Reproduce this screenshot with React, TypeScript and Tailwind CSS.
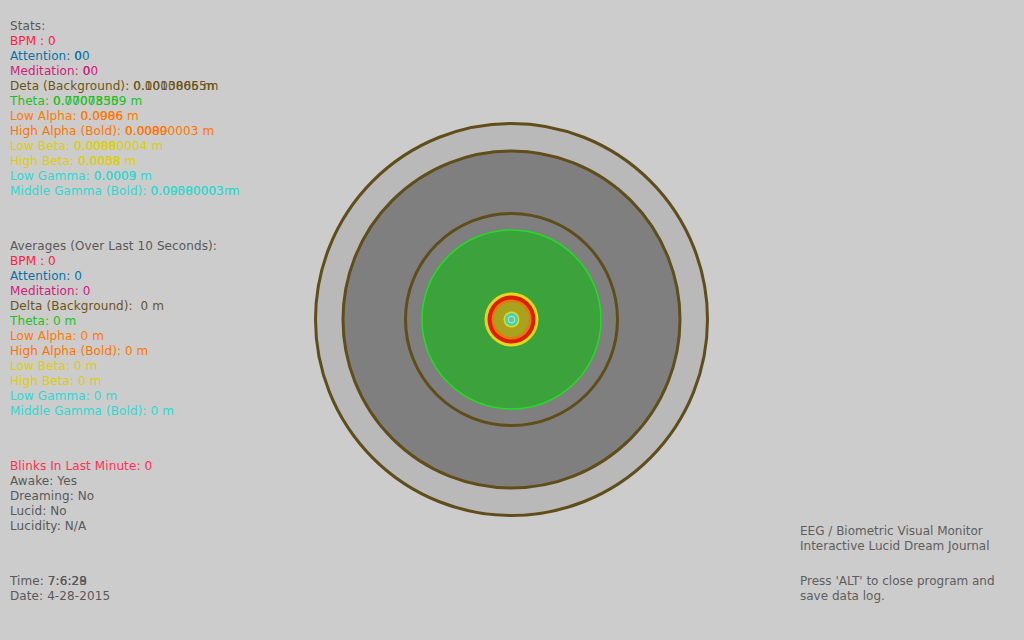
import React from "react";

const Ov = ({ a, b, dx = 0 }: { a: string; b: string; dx?: number }) => (
  <span className="relative inline-block">
    <span>{a}</span>
    <span className="absolute top-0 whitespace-pre" style={{ left: dx }}>
      {b}
    </span>
  </span>
);

const L = ({ c, children }: { c: string; children: React.ReactNode }) => (
  <div className={`whitespace-pre ${c}`}>{children}</div>
);

export default function App() {
  return (
    <div
      className="relative w-[1024px] h-[640px] bg-[#cccccc] overflow-hidden flex"
      style={{ fontFamily: '"DejaVu Sans", Verdana, sans-serif' }}
    >
      <svg
        className="absolute inset-0"
        width={1024}
        height={640}
        viewBox="0 0 1024 640"
      >
        <circle cx={511.5} cy={319.5} r={196} fill="#b9b9b9" stroke="#614d1a" strokeWidth={3} />
        <circle cx={511.5} cy={319.5} r={168.5} fill="#7f7f7f" stroke="#614d1a" strokeWidth={3} />
        <circle cx={511.5} cy={319.5} r={106} fill="#7f7f7f" stroke="#614d1a" strokeWidth={3} />
        <circle cx={511.5} cy={319.5} r={89.5} fill="#3ca33c" stroke="#22dd22" strokeWidth={1.5} />
        <circle cx={511.5} cy={319.5} r={27} fill="#e4d81c" />
        <circle cx={511.5} cy={319.5} r={24} fill="#e21c00" />
        <circle cx={511.5} cy={319.5} r={20} fill="#e07a12" />
        <circle cx={511.5} cy={319.5} r={17.5} fill="#aaa11c" />
        <circle cx={511.5} cy={319.5} r={8} fill="#e4d81c" />
        <circle cx={511.5} cy={319.5} r={6.5} fill="#3cd2c8" />
        <circle cx={511.5} cy={319.5} r={3.2} fill="#5cc8a8" stroke="#b8e0a0" strokeWidth={1.2} />
      </svg>

      <div className="relative flex flex-col gap-[40px] pl-[10px] pt-[19px] text-[12px] leading-[15px] tracking-[0.1px] text-[#595959]">
        <div>
          <L c="">Stats:</L>
          <L c="text-[#ff2040]">BPM : 0</L>
          <L c="text-[#0a72a4]">
            Attention: <Ov a="00" b="0" />
          </L>
          <L c="text-[#d0207c]">
            Meditation: <Ov a="00" b="0" />
          </L>
          <L c="text-[#6b5418]">
            Deta (Background): <Ov a="0.0003865 m" b="0.10100065m" />
          </L>
          <L c="text-[#22c022]">
            Theta: <Ov a="0.00073509 m" b="0.7700835" />
          </L>
          <L c="text-[#ff7a00]">
            Low Alpha: <Ov a="0.0906 m" b="0.0086" />
          </L>
          <L c="text-[#ff7400]">
            High Alpha (Bold): <Ov a="0.00000003 m" b="0.0089" />
          </L>
          <L c="text-[#dcd000]">
            Low Beta: <Ov a="0.00000004 m" b="0.0088" />
          </L>
          <L c="text-[#dcd000]">
            High Beta: <Ov a="0.0008 m" b="0.0038" />
          </L>
          <L c="text-[#30d8d0]">
            Low Gamma: <Ov a="0.0003 m" b="0.0009" />
          </L>
          <L c="text-[#30d8d0]">
            Middle Gamma (Bold): <Ov a="0.00000003 m" b="0.09580003m" />
          </L>
        </div>
        <div>
          <L c="">Averages (Over Last 10 Seconds):</L>
          <L c="text-[#ff2040]">BPM : 0</L>
          <L c="text-[#0a72a4]">Attention: 0</L>
          <L c="text-[#d0207c]">Meditation: 0</L>
          <L c="text-[#6b5418]">Delta (Background):  0 m</L>
          <L c="text-[#22c022]">Theta: 0 m</L>
          <L c="text-[#ff7a00]">Low Alpha: 0 m</L>
          <L c="text-[#ff7400]">High Alpha (Bold): 0 m</L>
          <L c="text-[#dcd000]">Low Beta: 0 m</L>
          <L c="text-[#dcd000]">High Beta: 0 m</L>
          <L c="text-[#30d8d0]">Low Gamma: 0 m</L>
          <L c="text-[#30d8d0]">Middle Gamma (Bold): 0 m</L>
        </div>
        <div>
          <L c="text-[#ff3050]">Blinks In Last Minute: 0</L>
          <L c="">Awake: Yes</L>
          <L c="">Dreaming: No</L>
          <L c="">Lucid: No</L>
          <L c="">Lucidity: N/A</L>
        </div>
        <div>
          <L c="">
            Time: <Ov a="7:6:28" b="7:6:29" />
          </L>
          <L c="">Date: 4-28-2015</L>
        </div>
      </div>

      <div className="relative ml-auto mr-[10px] flex flex-col justify-end gap-[20px] pb-[36px] text-[12px] leading-[15px] text-[#5e5e5e] w-[214px]">
        <div>
          <div className="whitespace-pre">EEG / Biometric Visual Monitor</div>
          <div className="whitespace-pre">Interactive Lucid Dream Journal</div>
        </div>
        <div>
          <div className="whitespace-pre">Press 'ALT' to close program and</div>
          <div className="whitespace-pre">save data log.</div>
        </div>
      </div>
    </div>
  );
}
